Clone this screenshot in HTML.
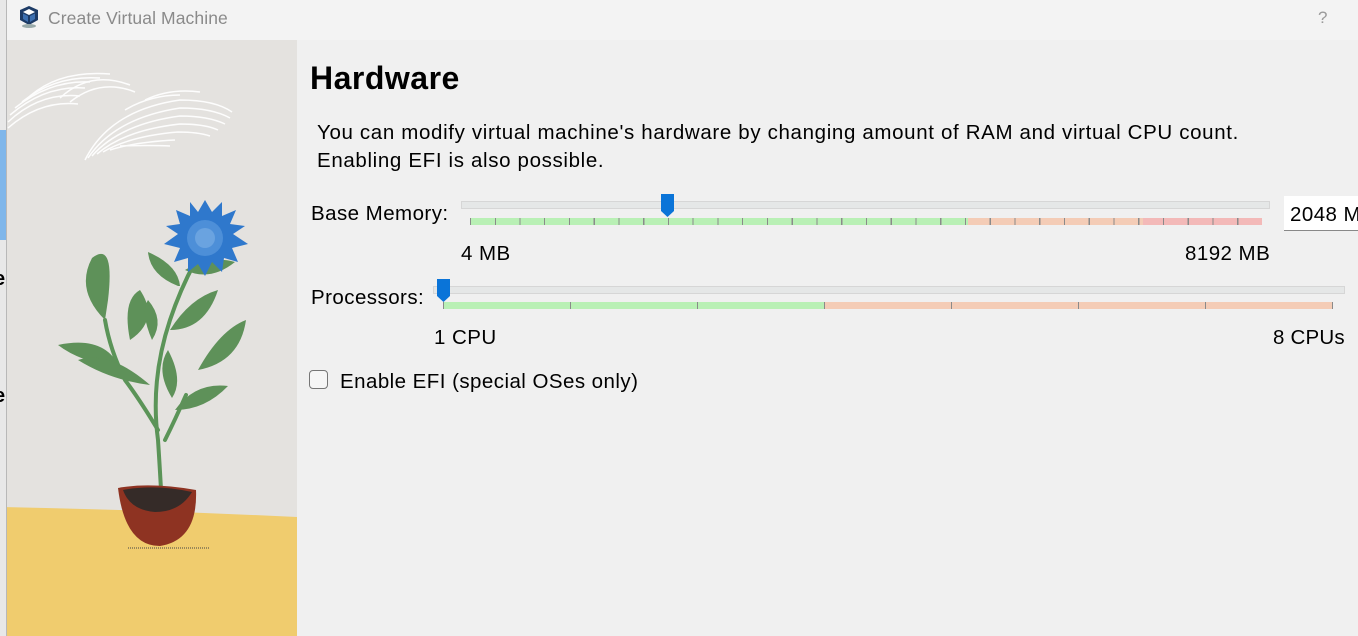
<!DOCTYPE html>
<html><head><meta charset="utf-8"><style>
body{margin:0;width:1358px;height:636px;overflow:hidden;background:#f0f0f0;font-family:"Liberation Sans",sans-serif;position:relative}
.a{position:absolute}
.t{font-size:20.5px;letter-spacing:.45px;color:#000;white-space:nowrap}
</style></head><body>
<div class="a" style="left:0;top:0;width:7px;height:636px;background:#e8e8e8"></div>
<div class="a" style="left:0;top:130px;width:7px;height:110px;background:#7fb6ea"></div>
<div class="a" style="left:0;top:268px;width:7px;height:30px;font-weight:bold;font-size:20px;overflow:hidden"><span style="margin-left:-6px">e</span></div>
<div class="a" style="left:0;top:385px;width:7px;height:30px;font-weight:bold;font-size:20px;overflow:hidden"><span style="margin-left:-6px">e</span></div>
<div class="a" style="left:6px;top:0;width:1px;height:636px;background:#b8b8b8"></div>
<div class="a" style="left:7px;top:0;width:1351px;height:40px;background:#f3f3f3"></div>
<svg class="a" style="left:18px;top:5px" width="22" height="24" viewBox="0 0 22 24">
<path d="M11 1 L20 5 L20 15 L11 20 L2 15 L2 5 Z" fill="#1d3b66"/>
<path d="M11 4 L17 7 L11 10 L5 7 Z" fill="#fff"/>
<path d="M5 8.5 L10 11 L10 17 L5 14 Z M12 11 L17 8.5 L17 14 L12 17 Z" fill="#3c6fb0"/>
<ellipse cx="11" cy="21" rx="7" ry="2" fill="#9aa"/>
</svg>
<div class="a" style="left:48px;top:8px;font-size:17.5px;letter-spacing:.1px;color:#8a8a8a">Create Virtual Machine</div>
<div class="a" style="left:1318px;top:8px;font-size:17px;color:#9a9a9a">?</div>
<div class="a" style="left:7px;top:40px;width:290px;height:596px;background:#e4e2df;overflow:hidden">
<svg width="290" height="596" viewBox="7 40 290 596">
<g fill="none" stroke="#fff" stroke-width="1.5" opacity=".95">
<path d="M8 128 Q40 100 78 104"/><path d="M8 122 Q40 92 80 96"/><path d="M10 115 Q45 85 85 88"/><path d="M15 108 Q50 80 90 82"/><path d="M22 102 Q55 75 100 78"/><path d="M30 96 Q60 70 110 74"/>
<path d="M60 98 Q90 70 130 85"/><path d="M70 102 Q100 78 135 92"/>
<path d="M85 160 Q110 110 180 100 Q215 100 232 112"/><path d="M88 158 Q115 118 180 108 Q212 108 230 118"/><path d="M92 156 Q120 124 180 116 Q208 116 225 124"/><path d="M97 154 Q125 130 180 124 Q205 124 218 130"/><path d="M103 152 Q130 136 178 132 Q198 132 210 136"/>
<path d="M110 150 Q135 142 175 140"/><path d="M120 146 Q150 145 170 146"/>
<path d="M125 110 Q150 95 180 95"/><path d="M145 100 Q170 88 200 92"/>
</g>
<path d="M0 507 Q150 510 297 517 L297 636 L0 636 Z" fill="#f0cc6e"/>
<g stroke="#5b9458" stroke-width="4" fill="none" stroke-linecap="round">
<path d="M162 508 Q160 470 158 440 Q150 380 170 320 Q180 290 195 262"/>
<path d="M158 430 Q140 400 125 380 Q110 350 105 320"/>
<path d="M165 440 Q175 420 186 395"/>
</g>
<g fill="#5e9159">
<path d="M105 320 Q75 290 92 258 Q115 240 108 300 Z"/>
<path d="M130 340 Q122 300 140 290 Q160 320 130 340 Z"/>
<path d="M120 368 Q80 362 58 345 Q105 335 120 368 Z"/>
<path d="M150 385 Q110 350 78 360 Q110 380 150 385 Z"/>
<path d="M170 330 Q190 298 218 290 Q205 330 170 330 Z"/>
<path d="M178 286 Q150 275 148 252 Q178 265 180 286 Z"/>
<path d="M185 270 Q210 255 235 262 Q210 282 185 270 Z"/>
<path d="M198 370 Q220 330 246 320 Q240 362 198 370 Z"/>
<path d="M175 410 Q195 382 228 386 Q205 410 175 410 Z"/>
<path d="M172 398 Q155 370 168 350 Q184 380 172 398 Z"/>
<path d="M152 340 Q140 312 148 300 Q165 320 152 340 Z"/>
</g>
<polygon fill="#2f78cc" points="205,200 212,212 222,202 222,216 236,210 230,224 245,226 233,234 248,244 232,248 238,262 224,258 222,272 212,262 205,276 198,264 188,272 188,258 174,262 180,248 164,244 178,234 166,226 180,224 176,210 190,216 190,202 198,212"/>
<circle cx="205" cy="238" r="18" fill="#4d8fd8"/><circle cx="205" cy="238" r="10" fill="#6aa3e0"/>
<path d="M118 488 Q150 482 196 490 Q198 540 160 546 Q125 546 118 488 Z" fill="#8e3322"/>
<path d="M123 490 Q155 484 192 492 Q180 512 155 512 Q130 510 123 490 Z" fill="#352b28"/>
<path d="M128 548 L210 548" stroke="#444" stroke-dasharray="1 1" stroke-width="1"/>
</svg>
</div>
<div class="a" style="left:310px;top:60px;font-size:32px;letter-spacing:.5px;font-weight:bold">Hardware</div>
<div class="a t" style="left:317px;top:119px;line-height:28px;letter-spacing:.65px">You can modify virtual machine's hardware by changing amount of RAM and virtual CPU count.<br>Enabling EFI is also possible.</div>
<div class="a t" style="left:311px;top:202px">Base Memory:</div>
<div class="a" style="left:461px;top:201px;width:809px;height:8px;background:#e5e7e7;border:1px solid #d6d6d6;box-sizing:border-box"></div>
<div class="a" style="left:470px;top:218px;width:792px;height:7px;background-image:repeating-linear-gradient(90deg,#8a8a8a 0 1px,transparent 1px 24.75px),linear-gradient(90deg,#b9f0b5 0 498px,#f4ccb6 498px 673px,#f3b9b8 673px)"></div>
<svg class="a" style="left:661px;top:194px" width="13" height="24"><path d="M0 0H13V17L6.5 23L0 17Z" fill="#0a74d8"/></svg>
<div class="a t" style="left:461px;top:242px">4 MB</div>
<div class="a t" style="left:1185px;top:242px">8192 MB</div>
<div class="a" style="left:1284px;top:196px;width:80px;height:35px;background:#fff;border-bottom:1px solid #888;box-sizing:border-box"></div>
<div class="a t" style="left:1290px;top:203px">2048 MB</div>
<div class="a t" style="left:311px;top:286px">Processors:</div>
<div class="a" style="left:433px;top:286px;width:912px;height:8px;background:#e5e7e7;border:1px solid #d6d6d6;box-sizing:border-box"></div>
<div class="a" style="left:443px;top:302px;width:890px;height:7px;background-image:repeating-linear-gradient(90deg,#8a8a8a 0 1px,transparent 1px 127px),linear-gradient(90deg,#b9f0b5 0 382px,#f4ccb6 382px)"></div>
<svg class="a" style="left:437px;top:279px" width="13" height="24"><path d="M0 0H13V17L6.5 23L0 17Z" fill="#0a74d8"/></svg>
<div class="a t" style="left:434px;top:326px">1 CPU</div>
<div class="a t" style="left:1273px;top:326px;letter-spacing:.2px">8 CPUs</div>
<div class="a" style="left:309px;top:370px;width:19px;height:19px;border:1px solid #767676;border-radius:4px;background:#f6f6f6;box-sizing:border-box"></div>
<div class="a t" style="left:340px;top:370px">Enable EFI (special OSes only)</div>
</body></html>
